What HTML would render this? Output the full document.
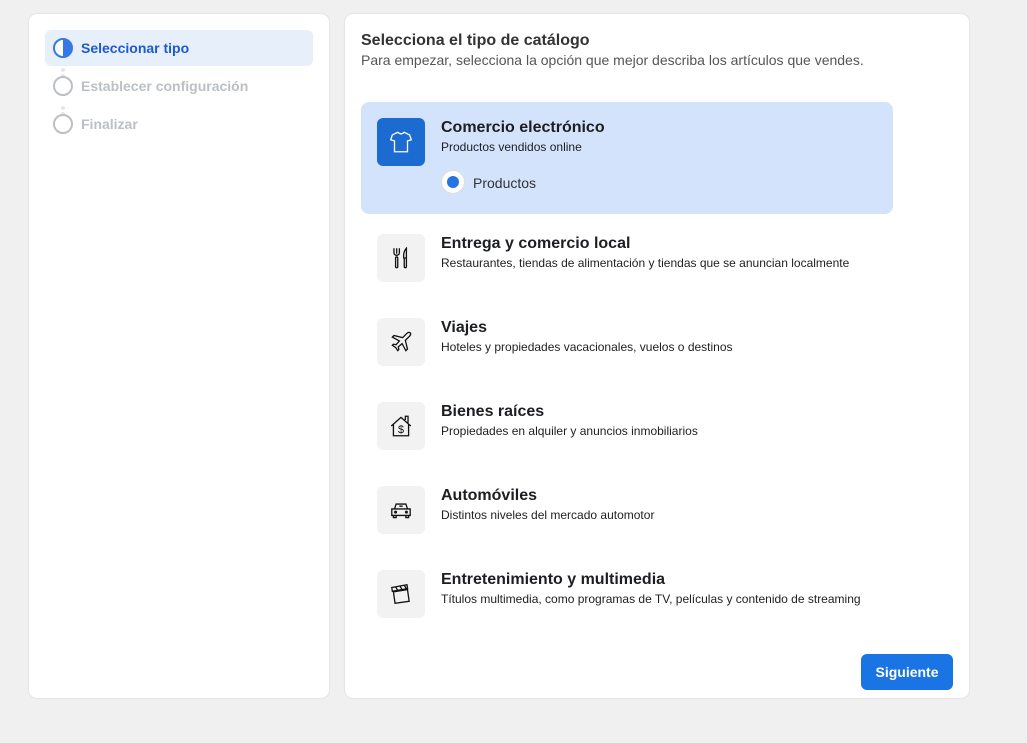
<!DOCTYPE html>
<html><head><meta charset="utf-8"><style>
*{box-sizing:border-box;margin:0;padding:0}
body{width:1027px;height:743px;background:#f0f0f0;font-family:"Liberation Sans",Arial,sans-serif;position:relative;overflow:hidden}
.left{position:absolute;left:29px;top:14px;width:300px;height:684px;background:#fff;border-radius:8px;box-shadow:0 0 2px rgba(0,0,0,.12)}
.right{position:absolute;left:345px;top:14px;width:624px;height:684px;background:#fff;border-radius:8px;box-shadow:0 0 2px rgba(0,0,0,.12)}
.step{position:absolute;left:16px;height:36px;width:268px;font-size:14px;font-weight:bold;color:#bcc0c4;display:flex;align-items:center;padding-left:8px}
.step .c{width:20px;height:20px;border-radius:50%;border:2px solid #bcc0c4;margin-right:8px;flex:none}
.step.act{background:#e7effb;border-radius:6px;color:#1b5ad0}
.step.act .c{border-color:#3578e5;background:linear-gradient(90deg,#fff 50%,#3578e5 50%)}
.dot{position:absolute;left:32px;width:4px;height:4px;border-radius:50%;background:#e4e6eb}
h1{position:absolute;left:16px;top:18px;font-size:16px;font-weight:bold;color:#333}
.sub{position:absolute;left:16px;top:38px;font-size:14px;color:#555}
.opt{position:absolute;left:16px;width:532px;height:112px;border-radius:8px}
.opt.sel{background:#d3e3fb}
.ic{position:absolute;left:16px;top:16px;width:48px;height:48px;border-radius:6px;background:#f2f2f2;display:flex;align-items:center;justify-content:center}
.sel .ic{background:#1c6bd1}
.t{position:absolute;left:80px;top:17px;font-size:16px;font-weight:bold;color:#1c1e21}
.d{position:absolute;left:80px;top:38px;font-size:12px;color:#1c1e21}
.radio{position:absolute;left:80px;top:68px;width:24px;height:24px;border-radius:50%;background:#fff;border:1px solid #ddd}
.radio:after{content:"";position:absolute;left:5px;top:5px;width:12px;height:12px;border-radius:50%;background:#2374e1}
.rl{position:absolute;left:112px;top:73px;font-size:14px;color:#333}
.btn{position:absolute;left:516px;top:640px;width:92px;height:36px;background:#1b74e4;color:#fff;border-radius:6px;font-size:14px;font-weight:bold;display:flex;align-items:center;justify-content:center}
svg{fill:none;stroke:#111;stroke-width:1.2}
</style></head><body>
<div class="left">
 <div class="step act" style="top:16px"><span class="c"></span>Seleccionar tipo</div>
 <div class="dot" style="top:54px"></div><div class="dot" style="top:60px"></div>
 <div class="step" style="top:54px"><span class="c"></span>Establecer configuración</div>
 <div class="dot" style="top:92px"></div><div class="dot" style="top:98px"></div>
 <div class="step" style="top:92px"><span class="c"></span>Finalizar</div>
</div>
<div class="right">
 <h1>Selecciona el tipo de catálogo</h1>
 <div class="sub">Para empezar, selecciona la opción que mejor describa los artículos que vendes.</div>

 <div class="opt sel" style="top:88px">
  <div class="ic"><svg width="26" height="26" viewBox="0 0 24 24" style="stroke:#fff"><path d="M9 3 L4 5.5 L2.5 10 L6 11 L6 21 L18 21 L18 11 L21.5 10 L20 5.5 L15 3 Q12 6 9 3Z"/></svg></div>
  <div class="t">Comercio electrónico</div><div class="d">Productos vendidos online</div>
  <div class="radio"></div><div class="rl">Productos</div>
 </div>

 <div class="opt" style="top:204px">
  <div class="ic"><svg width="26" height="26" viewBox="0 0 24 24"><path d="M5.5 3v5M8 3v5M10.5 3v5M5.5 8q2.5 3 5 0"/><rect x="7" y="11" width="2" height="10" rx="1"/><path d="M17 3q-3 3-2.5 9H17zM15 12.5v7.5a1 1 0 0 0 2 0V3"/></svg></div>
  <div class="t">Entrega y comercio local</div><div class="d">Restaurantes, tiendas de alimentación y tiendas que se anuncian localmente</div>
 </div>

 <div class="opt" style="top:288px">
  <div class="ic"><svg width="26" height="26" viewBox="0 0 24 24"><path d="M20.5 3.5q-1.5-1-3 .5l-4 4-8-2-1.5 1.5 6.5 3.5-3 3.5-2.5-.5-1 1 3 2 2 3 1-1-.5-2.5 3.5-3 3.5 6.5 1.5-1.5-2-8 4-4q1.5-1.5.5-3z"/></svg></div>
  <div class="t">Viajes</div><div class="d">Hoteles y propiedades vacacionales, vuelos o destinos</div>
 </div>

 <div class="opt" style="top:372px">
  <div class="ic"><svg width="26" height="26" viewBox="0 0 24 24"><path d="M3 12l9-8 9 8M5 10v11h14V10M16 6.5V3h2.5v6"/><text x="12" y="18.5" font-size="10" text-anchor="middle" fill="#111" stroke="none" font-family="Liberation Sans">$</text></svg></div>
  <div class="t">Bienes raíces</div><div class="d">Propiedades en alquiler y anuncios inmobiliarios</div>
 </div>

 <div class="opt" style="top:456px">
  <div class="ic"><svg width="26" height="26" viewBox="0 0 24 24"><path d="M6 11l1.5-4.5h9L18 11M3.5 11h17v6h-17zM5 17v2h2.5v-2M16.5 17v2H19v-2M10.5 8.5h3"/><circle cx="7" cy="14" r=".8" fill="#111"/><circle cx="17" cy="14" r=".8" fill="#111"/></svg></div>
  <div class="t">Automóviles</div><div class="d">Distintos niveles del mercado automotor</div>
 </div>

 <div class="opt" style="top:540px">
  <div class="ic"><svg width="26" height="26" viewBox="0 0 24 24"><path d="M5 10l1.5 10.5 13-1.8L18 8zM4 9.5L3.5 6l14-2.5.6 3.5zM7 5.5l2 3M11 4.8l2 3M15 4l2 3"/></svg></div>
  <div class="t">Entretenimiento y multimedia</div><div class="d">Títulos multimedia, como programas de TV, películas y contenido de streaming</div>
 </div>

 <div class="btn">Siguiente</div>
</div>
</body></html>
